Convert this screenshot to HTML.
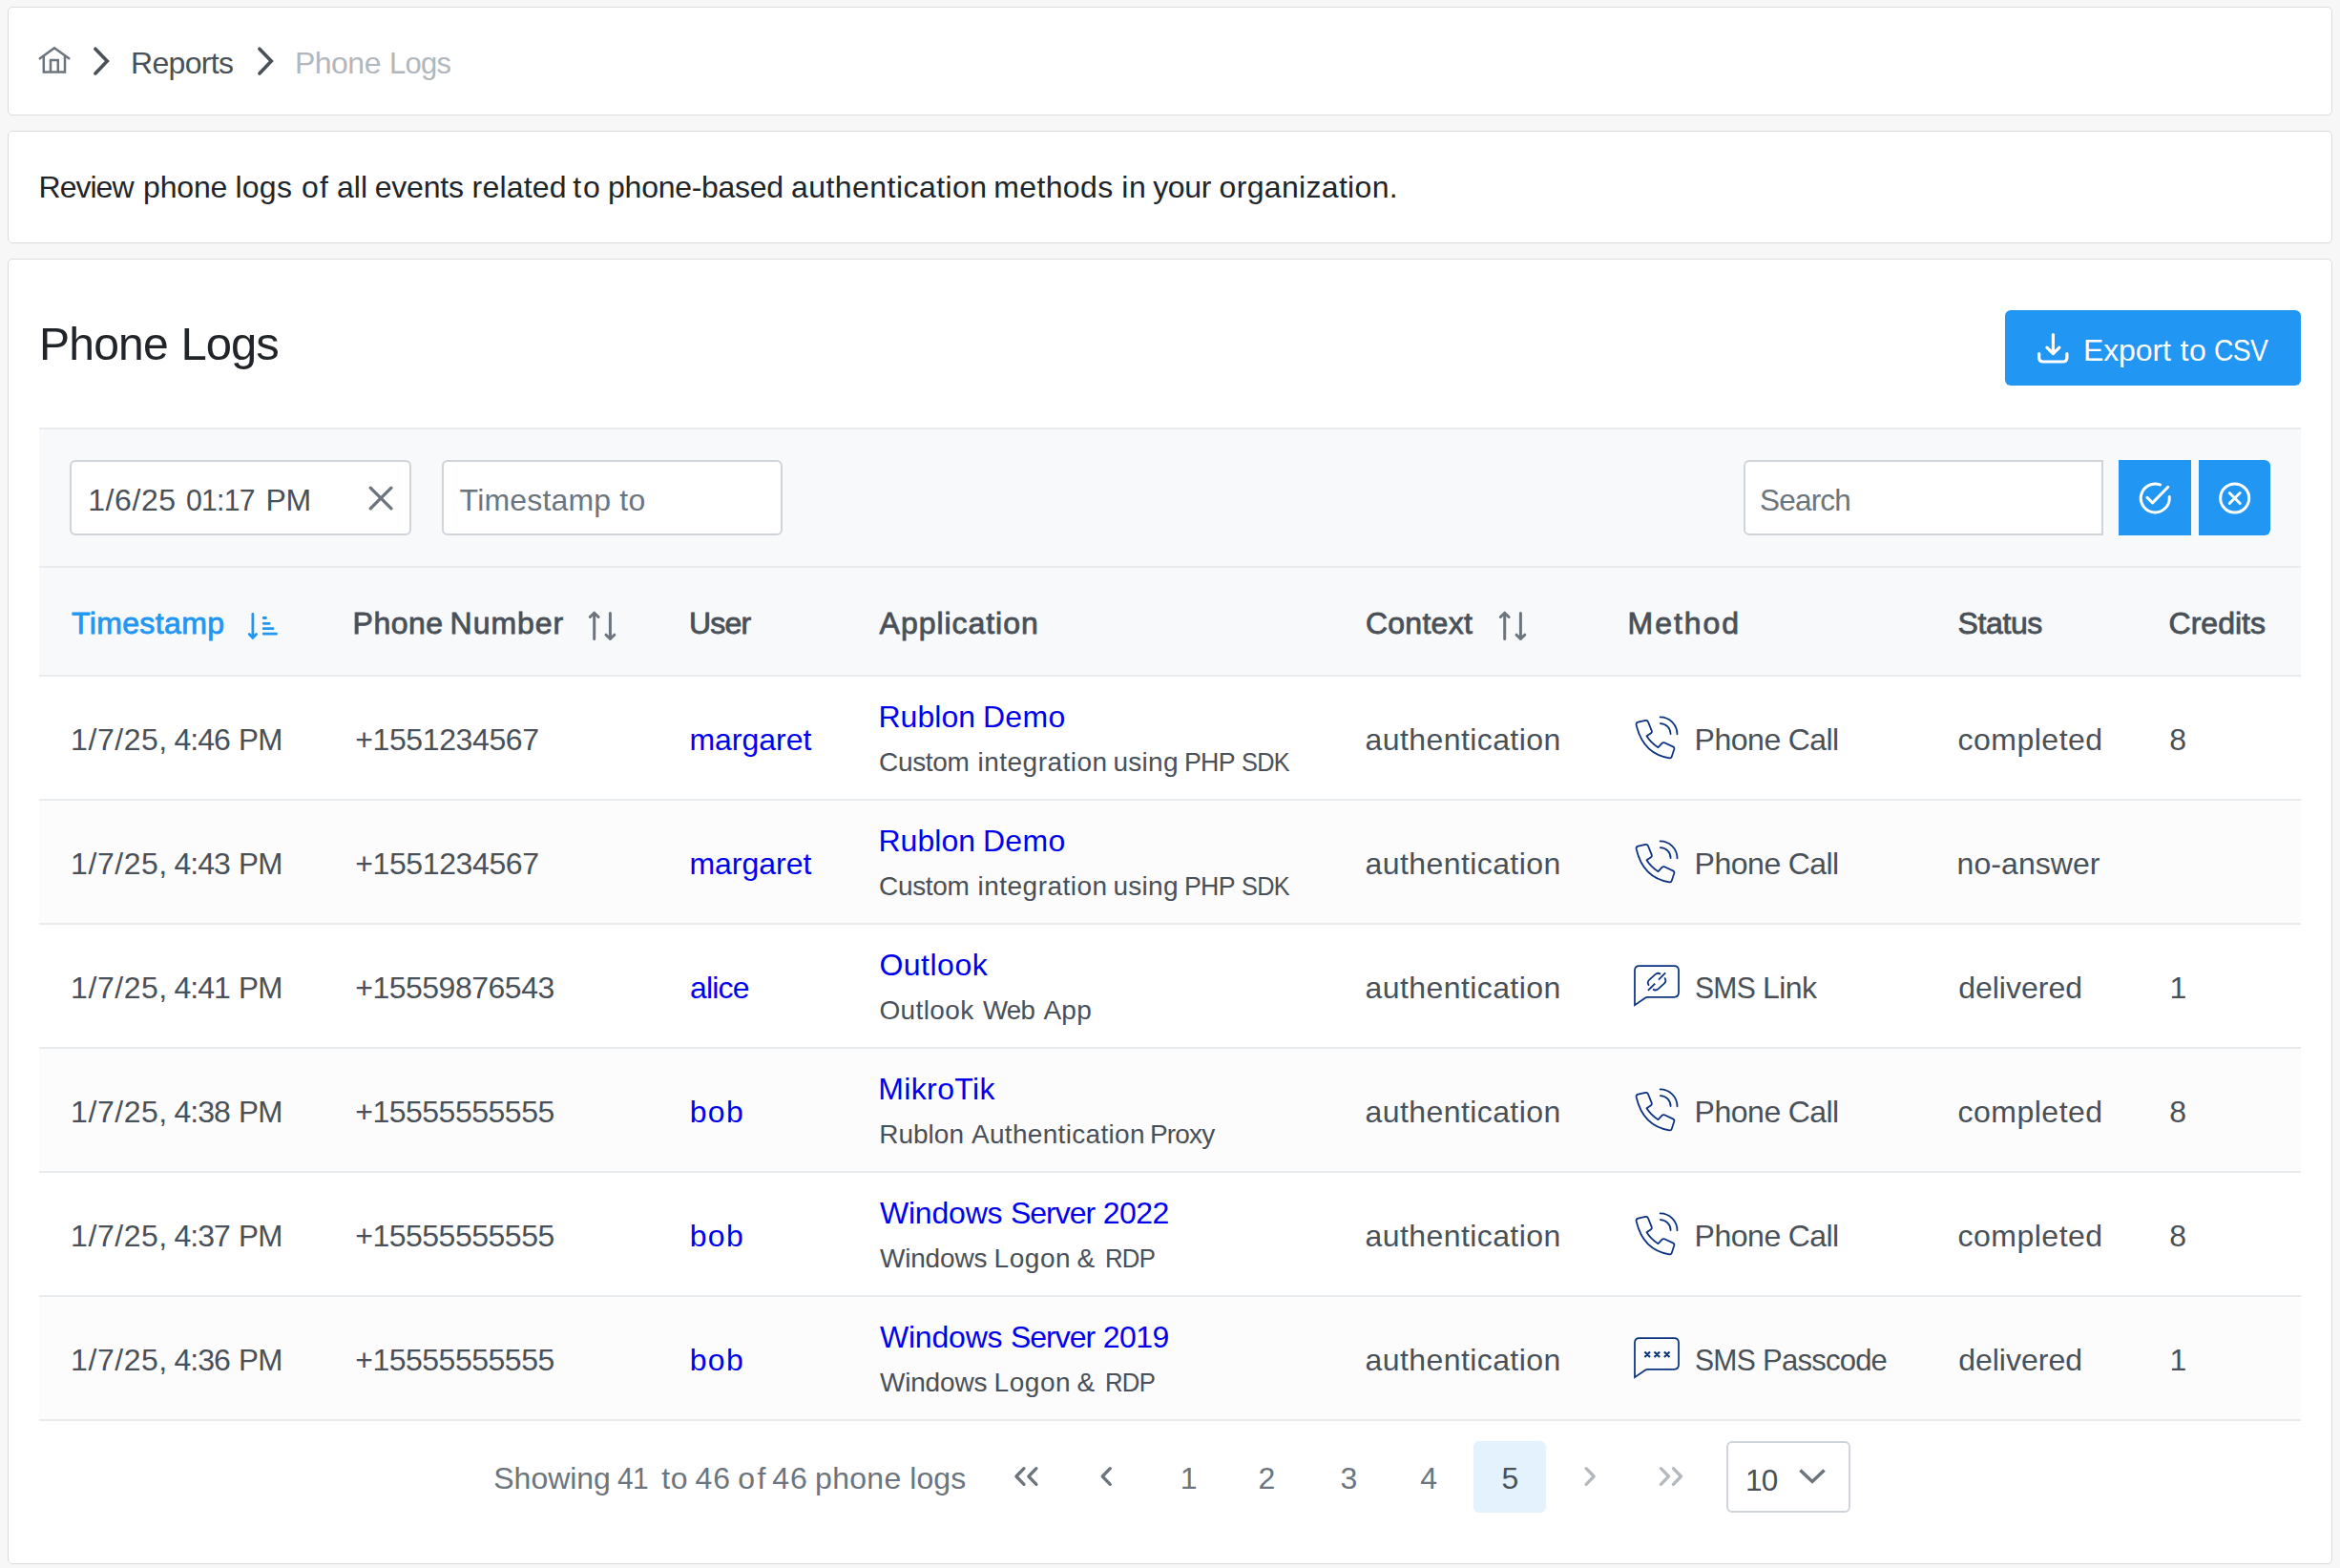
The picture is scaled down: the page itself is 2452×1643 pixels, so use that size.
<!DOCTYPE html>
<html lang="en"><head><meta charset="utf-8"><title>Phone Logs</title>
<style>
html,body{margin:0;padding:0}
body{width:2452px;height:1643px;overflow:hidden;position:relative;background:#f7f7f7;font-family:'Liberation Sans',sans-serif;-webkit-font-smoothing:antialiased}
div,svg,.t,a{position:absolute;box-sizing:border-box}
.g{position:absolute;left:0;top:0;margin:0;font-weight:400}
.t{margin:0;white-space:pre;transform-origin:0 0;font-weight:400;text-decoration:none}
.card{background:#fff;border:1px solid #dcdcdc;border-radius:5px;left:8px;width:2436px}
.inp{background:#fff;border:2px solid #ced4da;border-radius:6px}
.btn{background:#2196f3;border-radius:6px}
.line{background:#e9ecef;left:41px;width:2370px;height:2px}
</style></head><body>

<div class="card" style="top:7px;height:114px"></div>
<div class="card" style="top:137px;height:118px"></div>
<div class="card" style="top:271px;height:1368px"></div>
<div  style="left:41px;top:448px;width:2370px;height:261px;background:#f8f9fa"></div>
<div  style="left:41px;top:839px;width:2370px;height:130px;background:#fcfcfc"></div>
<div  style="left:41px;top:1099px;width:2370px;height:130px;background:#fcfcfc"></div>
<div  style="left:41px;top:1359px;width:2370px;height:130px;background:#fcfcfc"></div>
<div class="line" style="top:448px"></div>
<div class="line" style="top:593px"></div>
<div class="line" style="top:707px"></div>
<div class="line" style="top:837px"></div>
<div class="line" style="top:967px"></div>
<div class="line" style="top:1097px"></div>
<div class="line" style="top:1227px"></div>
<div class="line" style="top:1357px"></div>
<div class="line" style="top:1487px"></div>
<div class="btn" style="left:2101px;top:325px;width:310px;height:79px;"></div>
<div class="inp" style="left:73px;top:482px;width:358px;height:79px;"></div>
<div class="inp" style="left:463px;top:482px;width:357px;height:79px;"></div>
<div class="inp" style="left:1827px;top:482px;width:377px;height:79px;border-radius:6px 0 0 6px"></div>
<div class="btn" style="left:2220px;top:482px;width:76px;height:79px;border-radius:0"></div>
<div class="btn" style="left:2304px;top:482px;width:75px;height:79px;border-radius:0 6px 6px 0"></div>
<div  style="left:1544px;top:1510px;width:76px;height:75px;background:#e3f2fd;border-radius:6px"></div>
<div class="inp" style="left:1809px;top:1510px;width:130px;height:75px;"></div>
<span class="t" style="left:137.0px;top:50px;font-size:32px;line-height:32px;letter-spacing:-0.67px;color:#495057;">Reports</span>
<span class="g"><span class="t" style="left:308.9px;top:50px;font-size:32px;line-height:32px;letter-spacing:-0.50px;color:#b1b7bd;">Phone </span><span class="t" style="left:407.9px;top:50px;font-size:32px;line-height:32px;letter-spacing:-0.80px;transform:scaleX(0.969);color:#b1b7bd;">Logs</span></span>
<p class="g"><span class="t" style="left:40.6px;top:180px;font-size:32px;line-height:32px;letter-spacing:-1.00px;color:#212529;">Review </span><span class="t" style="left:150.0px;top:180px;font-size:32px;line-height:32px;letter-spacing:-0.15px;color:#212529;">phone </span><span class="t" style="left:246.5px;top:180px;font-size:32px;line-height:32px;letter-spacing:0.23px;color:#212529;">logs </span><span class="t" style="left:315.9px;top:180px;font-size:32px;line-height:32px;letter-spacing:1.40px;color:#212529;">of </span><span class="t" style="left:352.9px;top:180px;font-size:32px;line-height:32px;letter-spacing:0.15px;color:#212529;">all </span><span class="t" style="left:392.8px;top:180px;font-size:32px;line-height:32px;letter-spacing:-0.24px;color:#212529;">events </span><span class="t" style="left:494.6px;top:180px;font-size:32px;line-height:32px;letter-spacing:0.18px;color:#212529;">related </span><span class="t" style="left:600.3px;top:180px;font-size:32px;line-height:32px;letter-spacing:1.70px;color:#212529;">to </span><span class="t" style="left:637.1px;top:180px;font-size:32px;line-height:32px;letter-spacing:-0.28px;color:#212529;">phone-based </span><span class="t" style="left:829.0px;top:180px;font-size:32px;line-height:32px;letter-spacing:0.45px;color:#212529;">authentication </span><span class="t" style="left:1041.2px;top:180px;font-size:32px;line-height:32px;letter-spacing:0.37px;color:#212529;">methods </span><span class="t" style="left:1175.2px;top:180px;font-size:32px;line-height:32px;letter-spacing:0.80px;color:#212529;">in </span><span class="t" style="left:1208.2px;top:180px;font-size:32px;line-height:32px;letter-spacing:-0.37px;color:#212529;">your </span><span class="t" style="left:1277.6px;top:180px;font-size:32px;line-height:32px;letter-spacing:0.32px;color:#212529;">organization.</span></p>
<h2 class="g"><span class="t" style="left:41.2px;top:336px;font-size:49px;line-height:49px;letter-spacing:-0.80px;transform:scaleX(0.980);color:#212529;">Phone </span><span class="t" style="left:189.4px;top:336px;font-size:49px;line-height:49px;letter-spacing:-0.93px;color:#212529;">Logs</span></h2>
<span class="g"><span class="t" style="left:2182.9px;top:351px;font-size:32px;line-height:32px;letter-spacing:-0.10px;color:#fff;">Export </span><span class="t" style="left:2284.6px;top:351px;font-size:32px;line-height:32px;letter-spacing:0.50px;color:#fff;">to </span><span class="t" style="left:2320.0px;top:351px;font-size:32px;line-height:32px;letter-spacing:-0.80px;transform:scaleX(0.885);color:#fff;">CSV</span></span>
<span class="g"><span class="t" style="left:92.2px;top:508px;font-size:32px;line-height:32px;letter-spacing:0.60px;color:#495057;">1/6/25 </span><span class="t" style="left:194.6px;top:508px;font-size:32px;line-height:32px;letter-spacing:-0.80px;transform:scaleX(0.943);color:#495057;">01:17 </span><span class="t" style="left:278.4px;top:508px;font-size:32px;line-height:32px;letter-spacing:-0.20px;color:#495057;">PM</span></span>
<span class="t" style="left:481.6px;top:508px;font-size:32px;line-height:32px;letter-spacing:0.18px;color:#6c757d;">Timestamp to</span>
<span class="t" style="left:1844.4px;top:508px;font-size:32px;line-height:32px;letter-spacing:-0.80px;transform:scaleX(0.984);color:#6c757d;">Search</span>
<b class="t" style="left:75.0px;top:637px;font-size:32px;line-height:32px;-webkit-text-stroke:0.8px #2196f3;letter-spacing:0.36px;color:#2196f3;">Timestamp</b>
<b class="g"><span class="t" style="left:369.6px;top:637px;font-size:32px;line-height:32px;-webkit-text-stroke:0.8px #495057;letter-spacing:0.45px;color:#495057;">Phone </span><span class="t" style="left:471.6px;top:637px;font-size:32px;line-height:32px;-webkit-text-stroke:0.8px #495057;letter-spacing:0.94px;color:#495057;">Number</span></b>
<b class="t" style="left:721.9px;top:637px;font-size:32px;line-height:32px;-webkit-text-stroke:0.8px #495057;letter-spacing:-0.77px;color:#495057;">User</b>
<b class="t" style="left:921.6px;top:637px;font-size:32px;line-height:32px;-webkit-text-stroke:0.8px #495057;letter-spacing:0.96px;color:#495057;">Application</b>
<b class="t" style="left:1430.9px;top:637px;font-size:32px;line-height:32px;-webkit-text-stroke:0.8px #495057;letter-spacing:0.28px;color:#495057;">Context</b>
<b class="t" style="left:1705.6px;top:637px;font-size:32px;line-height:32px;-webkit-text-stroke:0.8px #495057;letter-spacing:1.94px;color:#495057;">Method</b>
<b class="t" style="left:2051.6px;top:637px;font-size:32px;line-height:32px;-webkit-text-stroke:0.8px #495057;letter-spacing:-0.40px;color:#495057;">Status</b>
<b class="t" style="left:2272.6px;top:637px;font-size:32px;line-height:32px;-webkit-text-stroke:0.8px #495057;color:#495057;">Credits</b>
<span class="g"><span class="t" style="left:74.1px;top:759px;font-size:32px;line-height:32px;letter-spacing:0.55px;color:#495057;">1/7/25, </span><span class="t" style="left:182.4px;top:759px;font-size:32px;line-height:32px;letter-spacing:-0.93px;color:#495057;">4:46 </span><span class="t" style="left:250.3px;top:759px;font-size:32px;line-height:32px;letter-spacing:-0.80px;transform:scaleX(0.981);color:#495057;">PM</span></span>
<span class="t" style="left:372.2px;top:759px;font-size:32px;line-height:32px;letter-spacing:-0.38px;color:#495057;">+1551234567</span>
<span class="t" style="left:722.4px;top:759px;font-size:32px;line-height:32px;letter-spacing:-0.01px;color:#0000ee;">margaret</span>
<span class="g"><span class="t" style="left:920.4px;top:735px;font-size:32px;line-height:32px;letter-spacing:0.06px;color:#0000ee;">Rublon </span><span class="t" style="left:1029.9px;top:735px;font-size:32px;line-height:32px;letter-spacing:0.37px;color:#0000ee;">Demo</span></span>
<span class="g"><span class="t" style="left:921.0px;top:785px;font-size:28px;line-height:28px;letter-spacing:-0.32px;color:#495057;">Custom </span><span class="t" style="left:1024.6px;top:785px;font-size:28px;line-height:28px;letter-spacing:0.47px;color:#495057;">integration </span><span class="t" style="left:1166.5px;top:785px;font-size:28px;line-height:28px;letter-spacing:0.27px;color:#495057;">using </span><span class="t" style="left:1240.9px;top:785px;font-size:28px;line-height:28px;letter-spacing:-0.80px;transform:scaleX(0.956);color:#495057;">PHP </span><span class="t" style="left:1300.9px;top:785px;font-size:28px;line-height:28px;letter-spacing:-0.80px;transform:scaleX(0.903);color:#495057;">SDK</span></span>
<span class="t" style="left:1430.6px;top:759px;font-size:32px;line-height:32px;letter-spacing:0.41px;color:#495057;">authentication</span>
<span class="g"><span class="t" style="left:1775.5px;top:759px;font-size:32px;line-height:32px;letter-spacing:-0.45px;color:#495057;">Phone </span><span class="t" style="left:1873.7px;top:759px;font-size:32px;line-height:32px;letter-spacing:-0.57px;color:#495057;">Call</span></span>
<span class="t" style="left:2051.6px;top:759px;font-size:32px;line-height:32px;letter-spacing:0.48px;color:#495057;">completed</span>
<span class="t" style="left:2273.2px;top:759px;font-size:32px;line-height:32px;color:#495057;">8</span>
<span class="g"><span class="t" style="left:74.1px;top:889px;font-size:32px;line-height:32px;letter-spacing:0.55px;color:#495057;">1/7/25, </span><span class="t" style="left:182.4px;top:889px;font-size:32px;line-height:32px;letter-spacing:-0.93px;color:#495057;">4:43 </span><span class="t" style="left:250.3px;top:889px;font-size:32px;line-height:32px;letter-spacing:-0.80px;transform:scaleX(0.981);color:#495057;">PM</span></span>
<span class="t" style="left:372.2px;top:889px;font-size:32px;line-height:32px;letter-spacing:-0.38px;color:#495057;">+1551234567</span>
<span class="t" style="left:722.4px;top:889px;font-size:32px;line-height:32px;letter-spacing:-0.01px;color:#0000ee;">margaret</span>
<span class="g"><span class="t" style="left:920.4px;top:865px;font-size:32px;line-height:32px;letter-spacing:0.06px;color:#0000ee;">Rublon </span><span class="t" style="left:1029.9px;top:865px;font-size:32px;line-height:32px;letter-spacing:0.37px;color:#0000ee;">Demo</span></span>
<span class="g"><span class="t" style="left:921.0px;top:915px;font-size:28px;line-height:28px;letter-spacing:-0.32px;color:#495057;">Custom </span><span class="t" style="left:1024.6px;top:915px;font-size:28px;line-height:28px;letter-spacing:0.47px;color:#495057;">integration </span><span class="t" style="left:1166.5px;top:915px;font-size:28px;line-height:28px;letter-spacing:0.27px;color:#495057;">using </span><span class="t" style="left:1240.9px;top:915px;font-size:28px;line-height:28px;letter-spacing:-0.80px;transform:scaleX(0.956);color:#495057;">PHP </span><span class="t" style="left:1300.9px;top:915px;font-size:28px;line-height:28px;letter-spacing:-0.80px;transform:scaleX(0.903);color:#495057;">SDK</span></span>
<span class="t" style="left:1430.6px;top:889px;font-size:32px;line-height:32px;letter-spacing:0.41px;color:#495057;">authentication</span>
<span class="g"><span class="t" style="left:1775.5px;top:889px;font-size:32px;line-height:32px;letter-spacing:-0.45px;color:#495057;">Phone </span><span class="t" style="left:1873.7px;top:889px;font-size:32px;line-height:32px;letter-spacing:-0.57px;color:#495057;">Call</span></span>
<span class="t" style="left:2050.6px;top:889px;font-size:32px;line-height:32px;letter-spacing:0.06px;color:#495057;">no-answer</span>
<span class="g"><span class="t" style="left:74.1px;top:1019px;font-size:32px;line-height:32px;letter-spacing:0.55px;color:#495057;">1/7/25, </span><span class="t" style="left:182.4px;top:1019px;font-size:32px;line-height:32px;letter-spacing:-0.93px;color:#495057;">4:41 </span><span class="t" style="left:250.3px;top:1019px;font-size:32px;line-height:32px;letter-spacing:-0.80px;transform:scaleX(0.981);color:#495057;">PM</span></span>
<span class="t" style="left:372.2px;top:1019px;font-size:32px;line-height:32px;letter-spacing:-0.49px;color:#495057;">+15559876543</span>
<span class="t" style="left:723.0px;top:1019px;font-size:32px;line-height:32px;letter-spacing:-0.82px;color:#0000ee;">alice</span>
<span class="t" style="left:921.4px;top:995px;font-size:32px;line-height:32px;letter-spacing:0.50px;color:#0000ee;">Outlook</span>
<span class="g"><span class="t" style="left:921.4px;top:1045px;font-size:28px;line-height:28px;letter-spacing:0.40px;color:#495057;">Outlook </span><span class="t" style="left:1030.1px;top:1045px;font-size:28px;line-height:28px;letter-spacing:-0.80px;transform:scaleX(0.989);color:#495057;">Web </span><span class="t" style="left:1093.4px;top:1045px;font-size:28px;line-height:28px;letter-spacing:0.25px;color:#495057;">App</span></span>
<span class="t" style="left:1430.6px;top:1019px;font-size:32px;line-height:32px;letter-spacing:0.41px;color:#495057;">authentication</span>
<span class="g"><span class="t" style="left:1776.1px;top:1019px;font-size:32px;line-height:32px;letter-spacing:-0.80px;transform:scaleX(0.941);color:#495057;">SMS </span><span class="t" style="left:1847.1px;top:1019px;font-size:32px;line-height:32px;letter-spacing:-0.57px;color:#495057;">Link</span></span>
<span class="t" style="left:2052.2px;top:1019px;font-size:32px;line-height:32px;letter-spacing:-0.01px;color:#495057;">delivered</span>
<span class="t" style="left:2273.6px;top:1019px;font-size:32px;line-height:32px;color:#495057;">1</span>
<span class="g"><span class="t" style="left:74.1px;top:1149px;font-size:32px;line-height:32px;letter-spacing:0.55px;color:#495057;">1/7/25, </span><span class="t" style="left:182.4px;top:1149px;font-size:32px;line-height:32px;letter-spacing:-0.93px;color:#495057;">4:38 </span><span class="t" style="left:250.3px;top:1149px;font-size:32px;line-height:32px;letter-spacing:-0.80px;transform:scaleX(0.981);color:#495057;">PM</span></span>
<span class="t" style="left:372.2px;top:1149px;font-size:32px;line-height:32px;letter-spacing:-0.49px;color:#495057;">+15555555555</span>
<span class="t" style="left:722.8px;top:1149px;font-size:32px;line-height:32px;letter-spacing:1.25px;color:#0000ee;">bob</span>
<span class="t" style="left:920.2px;top:1125px;font-size:32px;line-height:32px;letter-spacing:0.39px;color:#0000ee;">MikroTik</span>
<span class="g"><span class="t" style="left:921.2px;top:1175px;font-size:28px;line-height:28px;letter-spacing:0.02px;color:#495057;">Rublon </span><span class="t" style="left:1018.0px;top:1175px;font-size:28px;line-height:28px;letter-spacing:0.31px;color:#495057;">Authentication </span><span class="t" style="left:1205.0px;top:1175px;font-size:28px;line-height:28px;letter-spacing:-0.85px;color:#495057;">Proxy</span></span>
<span class="t" style="left:1430.6px;top:1149px;font-size:32px;line-height:32px;letter-spacing:0.41px;color:#495057;">authentication</span>
<span class="g"><span class="t" style="left:1775.5px;top:1149px;font-size:32px;line-height:32px;letter-spacing:-0.45px;color:#495057;">Phone </span><span class="t" style="left:1873.7px;top:1149px;font-size:32px;line-height:32px;letter-spacing:-0.57px;color:#495057;">Call</span></span>
<span class="t" style="left:2051.6px;top:1149px;font-size:32px;line-height:32px;letter-spacing:0.48px;color:#495057;">completed</span>
<span class="t" style="left:2273.2px;top:1149px;font-size:32px;line-height:32px;color:#495057;">8</span>
<span class="g"><span class="t" style="left:74.1px;top:1279px;font-size:32px;line-height:32px;letter-spacing:0.55px;color:#495057;">1/7/25, </span><span class="t" style="left:182.4px;top:1279px;font-size:32px;line-height:32px;letter-spacing:-0.93px;color:#495057;">4:37 </span><span class="t" style="left:250.3px;top:1279px;font-size:32px;line-height:32px;letter-spacing:-0.80px;transform:scaleX(0.981);color:#495057;">PM</span></span>
<span class="t" style="left:372.2px;top:1279px;font-size:32px;line-height:32px;letter-spacing:-0.49px;color:#495057;">+15555555555</span>
<span class="t" style="left:722.8px;top:1279px;font-size:32px;line-height:32px;letter-spacing:1.25px;color:#0000ee;">bob</span>
<span class="g"><span class="t" style="left:921.9px;top:1255px;font-size:32px;line-height:32px;letter-spacing:-0.18px;color:#0000ee;">Windows </span><span class="t" style="left:1058.9px;top:1255px;font-size:32px;line-height:32px;letter-spacing:-0.98px;color:#0000ee;">Server </span><span class="t" style="left:1155.8px;top:1255px;font-size:32px;line-height:32px;letter-spacing:-0.53px;color:#0000ee;">2022</span></span>
<span class="g"><span class="t" style="left:921.9px;top:1305px;font-size:28px;line-height:28px;letter-spacing:-0.17px;color:#495057;">Windows </span><span class="t" style="left:1041.6px;top:1305px;font-size:28px;line-height:28px;letter-spacing:0.55px;color:#495057;">Logon </span><span class="t" style="left:1128.6px;top:1305px;font-size:28px;line-height:28px;color:#495057;">&amp; </span><span class="t" style="left:1157.8px;top:1305px;font-size:28px;line-height:28px;letter-spacing:-0.80px;transform:scaleX(0.919);color:#495057;">RDP</span></span>
<span class="t" style="left:1430.6px;top:1279px;font-size:32px;line-height:32px;letter-spacing:0.41px;color:#495057;">authentication</span>
<span class="g"><span class="t" style="left:1775.5px;top:1279px;font-size:32px;line-height:32px;letter-spacing:-0.45px;color:#495057;">Phone </span><span class="t" style="left:1873.7px;top:1279px;font-size:32px;line-height:32px;letter-spacing:-0.57px;color:#495057;">Call</span></span>
<span class="t" style="left:2051.6px;top:1279px;font-size:32px;line-height:32px;letter-spacing:0.48px;color:#495057;">completed</span>
<span class="t" style="left:2273.2px;top:1279px;font-size:32px;line-height:32px;color:#495057;">8</span>
<span class="g"><span class="t" style="left:74.1px;top:1409px;font-size:32px;line-height:32px;letter-spacing:0.55px;color:#495057;">1/7/25, </span><span class="t" style="left:182.4px;top:1409px;font-size:32px;line-height:32px;letter-spacing:-0.93px;color:#495057;">4:36 </span><span class="t" style="left:250.3px;top:1409px;font-size:32px;line-height:32px;letter-spacing:-0.80px;transform:scaleX(0.981);color:#495057;">PM</span></span>
<span class="t" style="left:372.2px;top:1409px;font-size:32px;line-height:32px;letter-spacing:-0.49px;color:#495057;">+15555555555</span>
<span class="t" style="left:722.8px;top:1409px;font-size:32px;line-height:32px;letter-spacing:1.25px;color:#0000ee;">bob</span>
<span class="g"><span class="t" style="left:921.9px;top:1385px;font-size:32px;line-height:32px;letter-spacing:-0.18px;color:#0000ee;">Windows </span><span class="t" style="left:1058.9px;top:1385px;font-size:32px;line-height:32px;letter-spacing:-0.98px;color:#0000ee;">Server </span><span class="t" style="left:1155.8px;top:1385px;font-size:32px;line-height:32px;letter-spacing:-0.53px;color:#0000ee;">2019</span></span>
<span class="g"><span class="t" style="left:921.9px;top:1435px;font-size:28px;line-height:28px;letter-spacing:-0.17px;color:#495057;">Windows </span><span class="t" style="left:1041.6px;top:1435px;font-size:28px;line-height:28px;letter-spacing:0.55px;color:#495057;">Logon </span><span class="t" style="left:1128.6px;top:1435px;font-size:28px;line-height:28px;color:#495057;">&amp; </span><span class="t" style="left:1157.8px;top:1435px;font-size:28px;line-height:28px;letter-spacing:-0.80px;transform:scaleX(0.919);color:#495057;">RDP</span></span>
<span class="t" style="left:1430.6px;top:1409px;font-size:32px;line-height:32px;letter-spacing:0.41px;color:#495057;">authentication</span>
<span class="g"><span class="t" style="left:1776.1px;top:1409px;font-size:32px;line-height:32px;letter-spacing:-0.80px;transform:scaleX(0.941);color:#495057;">SMS </span><span class="t" style="left:1847.2px;top:1409px;font-size:32px;line-height:32px;letter-spacing:-0.80px;transform:scaleX(0.970);color:#495057;">Passcode</span></span>
<span class="t" style="left:2052.2px;top:1409px;font-size:32px;line-height:32px;letter-spacing:-0.01px;color:#495057;">delivered</span>
<span class="t" style="left:2273.6px;top:1409px;font-size:32px;line-height:32px;color:#495057;">1</span>
<span class="g"><span class="t" style="left:517.3px;top:1533px;font-size:32px;line-height:32px;letter-spacing:-0.03px;color:#6c757d;">Showing </span><span class="t" style="left:647.4px;top:1533px;font-size:32px;line-height:32px;letter-spacing:-0.80px;transform:scaleX(0.935);color:#6c757d;">41 </span><span class="t" style="left:693.2px;top:1533px;font-size:32px;line-height:32px;letter-spacing:0.60px;color:#6c757d;">to </span><span class="t" style="left:728.6px;top:1533px;font-size:32px;line-height:32px;letter-spacing:0.80px;color:#6c757d;">46 </span><span class="t" style="left:773.3px;top:1533px;font-size:32px;line-height:32px;letter-spacing:2.40px;color:#6c757d;">of </span><span class="t" style="left:809.3px;top:1533px;font-size:32px;line-height:32px;letter-spacing:0.80px;color:#6c757d;">46 </span><span class="t" style="left:854.1px;top:1533px;font-size:32px;line-height:32px;letter-spacing:0.28px;color:#6c757d;">phone </span><span class="t" style="left:953.2px;top:1533px;font-size:32px;line-height:32px;letter-spacing:0.10px;color:#6c757d;">logs</span></span>
<span class="t" style="left:1236.7px;top:1533px;font-size:32px;line-height:32px;color:#6c757d;">1</span>
<span class="t" style="left:1318.5px;top:1533px;font-size:32px;line-height:32px;color:#6c757d;">2</span>
<span class="t" style="left:1404.4px;top:1533px;font-size:32px;line-height:32px;color:#6c757d;">3</span>
<span class="t" style="left:1488.3px;top:1533px;font-size:32px;line-height:32px;color:#6c757d;">4</span>
<span class="t" style="left:1573.6px;top:1533px;font-size:32px;line-height:32px;color:#495057;">5</span>
<span class="t" style="left:1828.7px;top:1535px;font-size:32px;line-height:32px;letter-spacing:-0.80px;transform:scaleX(0.984);color:#495057;">10</span>
<svg style="left:36px;top:44px" width="42" height="36" viewBox="36 44 42 36" fill="none" stroke-linecap="round" stroke-linejoin="round"><g stroke="#6c757d" stroke-width="2.5" stroke-linejoin="miter"><path d="M41.8 61.3L57 50.2L72.3 61.3"/><path stroke-linecap="butt" d="M45.8 58.4V75.4H68V58.4M53 75.4V63H60.8V75.4"/></g></svg>
<svg style="left:94px;top:46px" width="24" height="36" viewBox="94 46 24 36" fill="none" stroke-linecap="round" stroke-linejoin="round"><path stroke="#495057" stroke-width="3.6" stroke-linejoin="miter" d="M99.9 51.2L112.3 64L99.9 76.9"/></svg>
<svg style="left:265.9px;top:46px" width="24" height="36" viewBox="265.9 46 24 36" fill="none" stroke-linecap="round" stroke-linejoin="round"><path stroke="#495057" stroke-width="3.6" stroke-linejoin="miter" d="M271.8 51.2L284.2 64L271.8 76.9"/></svg>
<svg style="left:2130px;top:344px" width="42" height="42" viewBox="2130 344 42 42" fill="none" stroke-linecap="round" stroke-linejoin="round"><path stroke="#fff" stroke-width="3.2" d="M2151.4 350.5V370M2144.9 364.1L2151.4 370.6L2157.9 364.1M2136.7 370.5V374.8Q2136.7 379 2141 379H2161.6Q2165.9 379 2165.9 374.8V370.5"/></svg>
<svg style="left:382px;top:506px" width="34" height="32" viewBox="382 506 34 32" fill="none" stroke-linecap="round" stroke-linejoin="round"><path stroke="#6c757d" stroke-width="3.3" d="M388.2 511.2L410 532.8M410 511.2L388.2 532.8"/></svg>
<svg style="left:2238px;top:502px" width="42" height="42" viewBox="2238 502 42 42" fill="none" stroke-linecap="round" stroke-linejoin="round"><path stroke="#fff" stroke-width="3" d="M2273.2 520.5A15 15 0 1 1 2263.5 507.9M2250 521.4L2255.6 526.9L2271.8 510.3"/></svg>
<svg style="left:2321px;top:502px" width="42" height="42" viewBox="2321 502 42 42" fill="none" stroke-linecap="round" stroke-linejoin="round"><circle cx="2341.7" cy="522" r="15" stroke="#fff" stroke-width="3"/><path stroke="#fff" stroke-width="3" d="M2336.2 516.5L2347.2 527.5M2347.2 516.5L2336.2 527.5"/></svg>
<svg style="left:256px;top:638px" width="38" height="36" viewBox="256 638 38 36" fill="none" stroke-linecap="round" stroke-linejoin="round"><path stroke="#2196f3" stroke-width="2.8" d="M264.9 643.5V668.5M261.2 664.6L264.9 668.3L268.6 664.6M276.2 647.5H278.5M276.2 653.3H282.2M276.2 658.7H286M276.2 664.2H289.5"/></svg>
<svg style="left:614px;top:636px" width="36" height="40" viewBox="614 636 36 40" fill="none" stroke-linecap="round" stroke-linejoin="round"><path stroke="#6c757d" stroke-width="3" d="M622.7 642.5V669.4M618.3 646.5L622.7 642.2L627.1 646.5M639.4 642.5V669.4M635.0 665.2L639.4 669.5L643.8 665.2"/></svg>
<svg style="left:1567.7px;top:636px" width="36" height="40" viewBox="1567.7 636 36 40" fill="none" stroke-linecap="round" stroke-linejoin="round"><path stroke="#6c757d" stroke-width="3" d="M1576.4 642.5V669.4M1572.0 646.5L1576.4 642.2L1580.8 646.5M1593.1 642.5V669.4M1588.7 665.2L1593.1 669.5L1597.5 665.2"/></svg>
<svg style="left:1708px;top:746px" width="56" height="54" viewBox="1708 746 56 54" fill="none" stroke-linecap="round" stroke-linejoin="round"><g transform="translate(1700 740)" stroke="#0b3281" stroke-width="1.75"><path d="M14.6 19.5Q14.2 17.2 16.5 16.6L24.2 14.9Q26.3 14.4 27 16.4L30.8 25.8Q31.3 27.3 30 28.2L25.5 31.3Q30 38.5 37.5 43.2L41.5 38.8Q42.6 37.6 44.2 38.3L53 42.4Q54.8 43.2 54.3 45L51.7 53Q51.2 54.6 49.3 54.3Q21.8 50.1 14.6 19.5Z"/><path d="M39.6 11.4A17.9 17.9 0 0 1 57.5 29.3"/><path d="M39.8 18.1A10.9 10.9 0 0 1 50.6 29"/></g></svg>
<svg style="left:1708px;top:876px" width="56" height="54" viewBox="1708 876 56 54" fill="none" stroke-linecap="round" stroke-linejoin="round"><g transform="translate(1700 870)" stroke="#0b3281" stroke-width="1.75"><path d="M14.6 19.5Q14.2 17.2 16.5 16.6L24.2 14.9Q26.3 14.4 27 16.4L30.8 25.8Q31.3 27.3 30 28.2L25.5 31.3Q30 38.5 37.5 43.2L41.5 38.8Q42.6 37.6 44.2 38.3L53 42.4Q54.8 43.2 54.3 45L51.7 53Q51.2 54.6 49.3 54.3Q21.8 50.1 14.6 19.5Z"/><path d="M39.6 11.4A17.9 17.9 0 0 1 57.5 29.3"/><path d="M39.8 18.1A10.9 10.9 0 0 1 50.6 29"/></g></svg>
<svg style="left:1708px;top:1006px" width="56" height="54" viewBox="1708 1006 56 54" fill="none" stroke-linecap="round" stroke-linejoin="round"><g transform="translate(1700 1000)" stroke="#0b3281" stroke-width="1.75"><path stroke-linejoin="miter" d="M13 16.8Q13 12.1 17.7 12.1H54.3Q59 12.1 59 16.8V40.1Q59 44.8 54.3 44.8H26.6Q25.3 44.8 24.2 45.5L13 53.2Z"/><g stroke-linecap="butt"><path d="M37.9 26.7L45.2 19.4M34.2 30.6L26.9 37.9"/><path d="M27.9 32.7Q25.3 29.2 28.3 26.6L34.4 21.1Q37.3 18.6 40 20.8"/><path d="M44.2 24.6Q46.8 28.1 43.8 30.7L37.7 36.2Q34.8 38.7 32.1 36.5"/></g></g></svg>
<svg style="left:1708px;top:1136px" width="56" height="54" viewBox="1708 1136 56 54" fill="none" stroke-linecap="round" stroke-linejoin="round"><g transform="translate(1700 1130)" stroke="#0b3281" stroke-width="1.75"><path d="M14.6 19.5Q14.2 17.2 16.5 16.6L24.2 14.9Q26.3 14.4 27 16.4L30.8 25.8Q31.3 27.3 30 28.2L25.5 31.3Q30 38.5 37.5 43.2L41.5 38.8Q42.6 37.6 44.2 38.3L53 42.4Q54.8 43.2 54.3 45L51.7 53Q51.2 54.6 49.3 54.3Q21.8 50.1 14.6 19.5Z"/><path d="M39.6 11.4A17.9 17.9 0 0 1 57.5 29.3"/><path d="M39.8 18.1A10.9 10.9 0 0 1 50.6 29"/></g></svg>
<svg style="left:1708px;top:1266px" width="56" height="54" viewBox="1708 1266 56 54" fill="none" stroke-linecap="round" stroke-linejoin="round"><g transform="translate(1700 1260)" stroke="#0b3281" stroke-width="1.75"><path d="M14.6 19.5Q14.2 17.2 16.5 16.6L24.2 14.9Q26.3 14.4 27 16.4L30.8 25.8Q31.3 27.3 30 28.2L25.5 31.3Q30 38.5 37.5 43.2L41.5 38.8Q42.6 37.6 44.2 38.3L53 42.4Q54.8 43.2 54.3 45L51.7 53Q51.2 54.6 49.3 54.3Q21.8 50.1 14.6 19.5Z"/><path d="M39.6 11.4A17.9 17.9 0 0 1 57.5 29.3"/><path d="M39.8 18.1A10.9 10.9 0 0 1 50.6 29"/></g></svg>
<svg style="left:1708px;top:1396px" width="56" height="54" viewBox="1708 1396 56 54" fill="none" stroke-linecap="round" stroke-linejoin="round"><g transform="translate(1700 1390)" stroke="#0b3281" stroke-width="1.75"><path stroke-linejoin="miter" d="M13 16.8Q13 12.1 17.7 12.1H54.3Q59 12.1 59 16.8V40.1Q59 44.8 54.3 44.8H26.6Q25.3 44.8 24.2 45.5L13 53.2Z"/><path stroke-linecap="butt" stroke-width="2.1" d="M23.4 26.4L29.0 32M29.0 26.4L23.4 32M33.5 26.4L39.1 32M39.1 26.4L33.5 32M43.9 26.4L49.5 32M49.5 26.4L43.9 32"/></g></svg>
<svg style="left:1056px;top:1530px" width="40" height="34" viewBox="1056 1530 40 34" fill="none" stroke-linecap="round" stroke-linejoin="round"><path stroke="#6c757d" stroke-width="3.3" d="M1073.0 1538.7L1064.9 1547L1073.0 1555.3"/><path stroke="#6c757d" stroke-width="3.3" d="M1085.9 1538.7L1077.8 1547L1085.9 1555.3"/></svg>
<svg style="left:1146px;top:1530px" width="28" height="34" viewBox="1146 1530 28 34" fill="none" stroke-linecap="round" stroke-linejoin="round"><path stroke="#6c757d" stroke-width="3.3" d="M1163.3 1538.7L1155.2 1547L1163.3 1555.3"/></svg>
<svg style="left:1652px;top:1530px" width="28" height="34" viewBox="1652 1530 28 34" fill="none" stroke-linecap="round" stroke-linejoin="round"><path stroke="#b4b9be" stroke-width="3.3" d="M1662.1 1538.7L1670.2 1547L1662.1 1555.3"/></svg>
<svg style="left:1732px;top:1530px" width="40" height="34" viewBox="1732 1530 40 34" fill="none" stroke-linecap="round" stroke-linejoin="round"><path stroke="#b4b9be" stroke-width="3.3" d="M1740.4 1538.7L1748.5 1547L1740.4 1555.3"/><path stroke="#b4b9be" stroke-width="3.3" d="M1753.4 1538.7L1761.5 1547L1753.4 1555.3"/></svg>
<svg style="left:1880px;top:1534px" width="38" height="28" viewBox="1880 1534 38 28" fill="none" stroke-linecap="round" stroke-linejoin="round"><path stroke="#6c757d" stroke-width="3.5" stroke-linecap="butt" stroke-linejoin="miter" d="M1886.4 1540.4L1899 1552.4L1911.6 1540.4"/></svg>
</body></html>
